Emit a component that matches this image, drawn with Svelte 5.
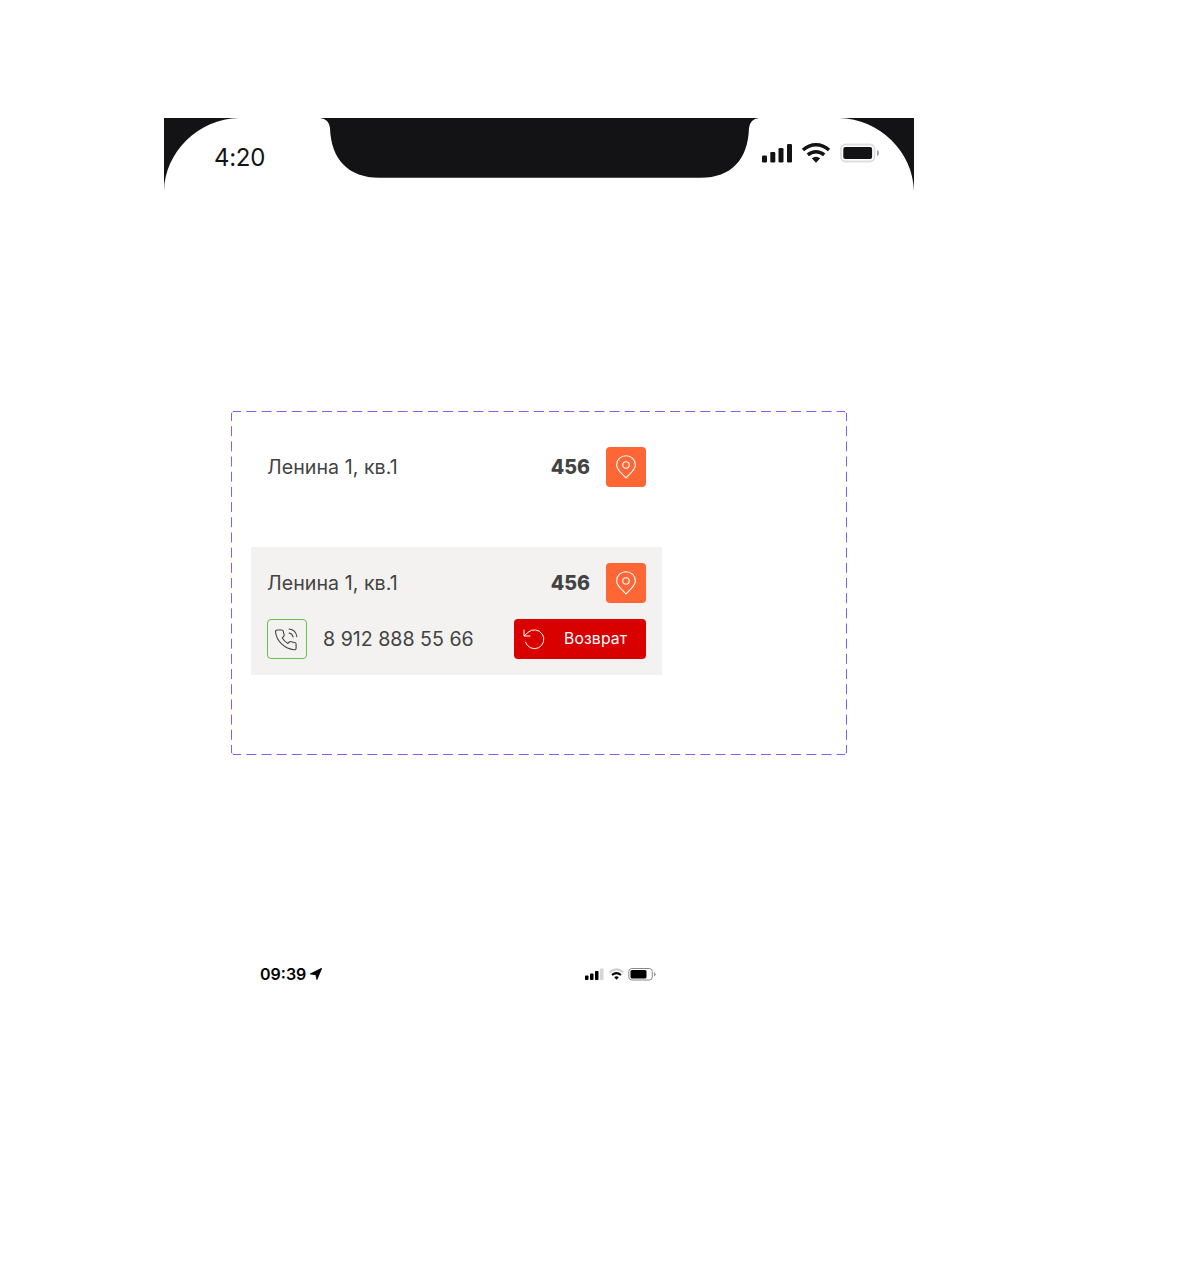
<script>
  const orders = [
    { address: 'Ленина 1, кв.1', count: '456', open: false },
    { address: 'Ленина 1, кв.1', count: '456', open: true, phone: '8 912 888 55 66' },
  ];
</script>

<main>
  <header class="device-bar">
    <svg class="shape" width="750" height="73" viewBox="0 0 750 73" fill="#131315">
      <path d="M0 0H75C34 1 1 34 0 73Z" />
      <path d="M750 0H675C716 1 749 34 750 73Z" />
      <path d="M156 0H595Q586 1 585 10C584 42 567 59.700 537 59.700H215C185 59.700 167 42 166 10Q165 1 156 0Z" />
    </svg>
    <span class="device-time">4:20</span>
    <svg class="device-status" width="118" height="22" viewBox="0 0 118 22" fill="#131315">
      <rect x="0" y="13.500" width="5" height="7" rx="1.3" />
      <rect x="8.3" y="10" width="5" height="10.5" rx="1.3" />
      <rect x="16.5" y="6" width="5" height="14.5" rx="1.3" />
      <rect x="25" y="2" width="5" height="18.5" rx="1.3" />
      <g fill="none" stroke="#131315" stroke-width="3.4">
        <path d="M41 8C48.7 1 59.3 1 67 8" />
        <path d="M45.8 12.900C50.6 8.700 57.4 8.700 62.2 12.900" />
      </g>
      <path d="M49.8 16.300Q54 13.100 58.2 16.300L54 20.700Z" />
      <rect x="79" y="2.500" width="33.5" height="17" rx="4.5" fill="none" stroke="#dededf" stroke-width="1.8" />
      <rect x="81.3" y="5" width="28.8" height="12" rx="2" />
      <path d="M115 8q2 .6 2 2.900t-2 3Z" fill="#a1a1a2" />
    </svg>
  </header>

  <section class="variants">
    <svg class="outline" width="616" height="344" viewBox="0 0 616 344" fill="none" stroke="#7b61ff">
      <path d="M2 .5H614M2 343.5H614" stroke-dasharray="10 5.135" stroke-dashoffset="1.8" />
      <path d="M.5 2V342M615.5 2V342" stroke-dasharray="10 5.18" stroke-dashoffset="2" />
      <path d="M.7 3Q.7 .7 3 .7M613 .7Q615.3 .7 615.3 3M.7 341Q.7 343.3 3 343.3M613 343.3Q615.3 343.3 615.3 341" opacity=".35" />
    </svg>
    {#each orders as order}
      <article class:open={order.open}>
        <div class="row">
          <span class="address">{order.address}</span>
          <strong>{order.count}</strong>
          <button class="pin" aria-label="Карта">
            <svg width="24" height="26" viewBox="0 0 24 26" fill="none" stroke="#fff" stroke-width="1.1">
              <path d="M12 24C9 20.500 2.600 16 2.600 10.700A9.400 9 0 0 1 21.400 10.700C21.400 16 15 20.500 12 24Z" stroke-linejoin="round" />
              <circle cx="12" cy="11" r="3.200" />
            </svg>
          </button>
        </div>
        {#if order.open}
          <div class="row">
            <button class="call" aria-label="Позвонить">
              <svg width="26" height="26" viewBox="0 0 26 26" fill="none" stroke="#434343" stroke-width="1.1" stroke-linecap="round" stroke-linejoin="round">
                <path d="M3.300 4H7.800Q9.100 4 9.300 5.300Q9.500 7 10.100 8.500Q10.500 9.700 9.700 10.400L8.300 11.900Q10.300 15.400 13.900 17.400L15.300 16Q16.100 15.300 17.300 15.700Q18.900 16.300 20.800 16.500Q22.100 16.800 22.100 18.100V21.900Q22.100 24 20.300 23.800C10.500 23 2.600 15 1.500 6Q1.300 4.200 3.300 4Z" />
                <path d="M15.100 7Q18.500 7.700 19.100 11M15.100 3Q22 3.800 22.900 10.800" />
              </svg>
            </button>
            <span class="phone">{order.phone}</span>
            <button class="return">
              <svg width="24" height="24" viewBox="0 0 24 24" fill="none" stroke="#fff" stroke-width="1" stroke-linecap="round" stroke-linejoin="round">
                <path d="M2 3V9H8M2.300 8.800L6 5.400A9.400 9.400 0 1 1 3.400 15" />
              </svg>
              <span>Возврат</span>
            </button>
          </div>
        {/if}
      </article>
    {/each}
  </section>

  <footer>
    <span class="time">09:39</span>
    <svg class="arrow" width="12" height="12" viewBox="0 0 12 12"><path d="M11.700 .3L6.900 11.500L5.900 6.700L.3 5.900Z" stroke="#000" stroke-width=".9" stroke-linejoin="round" /></svg>
    <svg class="status" width="72" height="14" viewBox="0 0 72 14">
      <rect x="0" y="8.500" width="3.500" height="4.500" rx=".8" />
      <rect x="5" y="6.500" width="3.500" height="6.500" rx=".8" />
      <rect x="10" y="4" width="3.500" height="9" rx=".8" />
      <rect x="15" y="1.500" width="3.500" height="11.500" rx=".8" fill="#d6d6d6" />
      <g fill="none" stroke-width="2">
        <path d="M24.600 5.500Q31.500 -.8 38.400 5.500" stroke="#d0d0d0" />
        <path d="M27 8Q31.500 4.200 36 8" stroke="#000" />
      </g>
      <path d="M29.200 10.200Q31.500 8.500 33.800 10.200L31.500 12.700Z" />
      <rect x="43.800" y="1.500" width="23.500" height="11.500" rx="3" fill="none" stroke="#888" stroke-width="1" />
      <rect x="45.500" y="3" width="16" height="8.500" rx="1.500" />
      <path d="M69 5q1.600 .5 1.600 2.200T69 9.500Z" fill="#999" />
    </svg>
  </footer>
</main>

<style>
  :global(body) { margin: 0; background: #fff; }
  main {
    box-sizing: border-box;
    width: 1185px;
    height: 1281px;
    padding: 118px 0 0 164px;
    background: #fff;
    color: #434343;
    font-family: Inter, Roboto, sans-serif;
  }
  button { box-sizing: border-box; margin: 0; padding: 0; border: 0; border-radius: 4px; font: inherit; flex: none; }
  svg { display: block; flex: none; }
  .device-bar { position: relative; display: flex; width: 750px; height: 73px; color: #131315; }
  .shape { position: absolute; inset: 0; }
  .device-time { position: relative; width: 60px; margin: 25px 0 0 50px; font-size: 24px; line-height: 30px; letter-spacing: -.3px; }
  .device-status { position: relative; margin: 24px 34px 0 auto; }
  .variants {
    position: relative;
    box-sizing: border-box;
    display: flex;
    flex-direction: column;
    gap: 44px;
    width: 616px;
    height: 344px;
    margin: 220px 0 0 67px;
    padding: 20px;
  }
  .outline { position: absolute; inset: 0; }
  article { display: flex; flex-direction: column; gap: 16px; width: 379px; padding: 16px; }
  .open { background: #f3f2f0; }
  .row { display: flex; align-items: center; height: 40px; font-size: 19.6px; line-height: 24px; white-space: nowrap; }
  .address { flex: 1; letter-spacing: .04px; }
  strong { font-weight: 800; margin-right: 16px; }
  .pin { display: grid; place-items: center; width: 40px; height: 40px; background: #ff6635; }
  .call { display: grid; place-items: center; width: 40px; height: 40px; border: 1px solid #6abf4b; background: transparent; }
  .phone { flex: 1; margin-left: 16px; }
  .return { display: flex; align-items: center; width: 132px; height: 40px; padding-left: 8px; background: #d90000; color: #fff; font-size: 15.700px; letter-spacing: .15px; }
  .return span { margin-left: 18px; }
  footer { display: flex; align-items: center; height: 16px; margin: 211px 0 0 96px; color: #000; }
  .time { width: 50px; font-size: 16px; font-weight: 600; line-height: 16px; }
  .status { margin-left: 263px; }
</style>
